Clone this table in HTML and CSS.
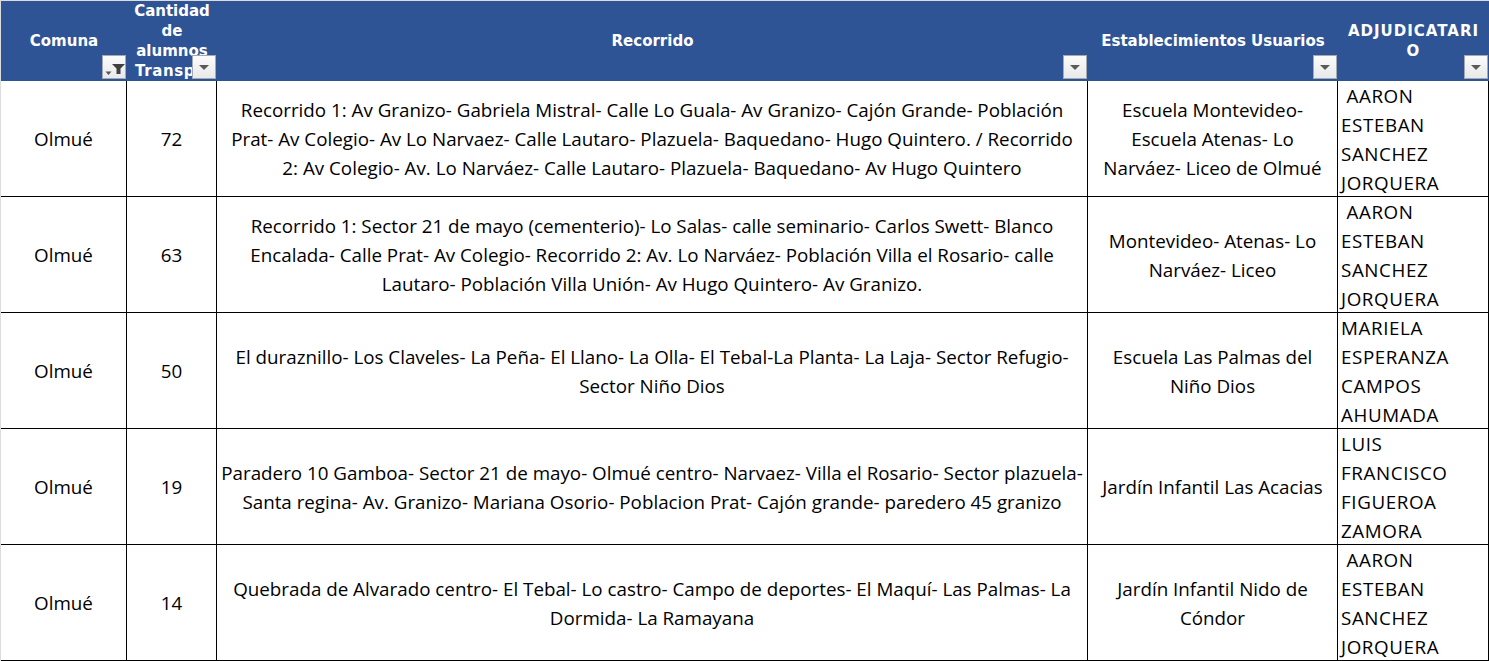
FILE: index.html
```html
<!DOCTYPE html>
<html lang="es">
<head>
<meta charset="utf-8">
<title>Recorridos</title>
<link rel="stylesheet" href="styles.css">
</head>
<body>
<div class="sheet">
  <div class="grid">
    <div class="hd">
      <span class="hd-text">Comuna</span>
      <span class="fbtn"><svg class="funnel" width="22" height="22" viewBox="0 0 22 22"><path d="M2.5 15.5h6l-3 3.5z" fill="#555"/><path d="M9 8h13l-4.5 4.5v5.5h-4v-5.5z" fill="#404040"/></svg></span>
    </div>
    <div class="hd">
      <span class="hd-text">Cantidad<br>de<br>alumnos<br><span class="clip">Transp</span></span>
      <span class="fbtn"><span class="tri"></span></span>
    </div>
    <div class="hd">
      <span class="hd-text">Recorrido</span>
      <span class="fbtn"><span class="tri"></span></span>
    </div>
    <div class="hd">
      <span class="hd-text">Establecimientos Usuarios</span>
      <span class="fbtn"><span class="tri"></span></span>
    </div>
    <div class="hd">
      <span class="hd-text wide">ADJUDICATARI<br>O</span>
      <span class="fbtn"><span class="tri"></span></span>
    </div>

    <div class="td c">Olmué</div>
    <div class="td c">72</div>
    <div class="td c">Recorrido 1: Av Granizo- Gabriela Mistral- Calle Lo Guala- Av Granizo- Cajón Grande- Población<br>Prat- Av Colegio- Av Lo Narvaez- Calle Lautaro- Plazuela- Baquedano- Hugo Quintero. / Recorrido<br>2: Av Colegio- Av. Lo Narváez- Calle Lautaro- Plazuela- Baquedano- Av Hugo Quintero</div>
    <div class="td c">Escuela Montevideo-<br>Escuela Atenas- Lo<br>Narváez- Liceo de Olmué</div>
    <div class="td l">&nbsp;AARON<br>ESTEBAN<br>SANCHEZ<br>JORQUERA</div>

    <div class="td c">Olmué</div>
    <div class="td c">63</div>
    <div class="td c">Recorrido 1: Sector 21 de mayo (cementerio)- Lo Salas- calle seminario- Carlos Swett- Blanco<br>Encalada- Calle Prat- Av Colegio- Recorrido 2: Av. Lo Narváez- Población Villa el Rosario- calle<br>Lautaro- Población Villa Unión- Av Hugo Quintero- Av Granizo.</div>
    <div class="td c">Montevideo- Atenas- Lo<br>Narváez- Liceo</div>
    <div class="td l">&nbsp;AARON<br>ESTEBAN<br>SANCHEZ<br>JORQUERA</div>

    <div class="td c">Olmué</div>
    <div class="td c">50</div>
    <div class="td c">El duraznillo- Los Claveles- La Peña- El Llano- La Olla- El Tebal-La Planta- La Laja- Sector Refugio-<br>Sector Niño Dios</div>
    <div class="td c">Escuela Las Palmas del<br>Niño Dios</div>
    <div class="td l">MARIELA<br>ESPERANZA<br>CAMPOS<br>AHUMADA</div>

    <div class="td c">Olmué</div>
    <div class="td c">19</div>
    <div class="td c">Paradero 10 Gamboa- Sector 21 de mayo- Olmué centro- Narvaez- Villa el Rosario- Sector plazuela-<br>Santa regina- Av. Granizo- Mariana Osorio- Poblacion Prat- Cajón grande- paredero 45 granizo</div>
    <div class="td c">Jardín Infantil Las Acacias</div>
    <div class="td l">LUIS<br>FRANCISCO<br>FIGUEROA<br>ZAMORA</div>

    <div class="td c">Olmué</div>
    <div class="td c">14</div>
    <div class="td c">Quebrada de Alvarado centro- El Tebal- Lo castro- Campo de deportes- El Maquí- Las Palmas- La<br>Dormida- La Ramayana</div>
    <div class="td c">Jardín Infantil Nido de<br>Cóndor</div>
    <div class="td l">&nbsp;AARON<br>ESTEBAN<br>SANCHEZ<br>JORQUERA</div>
  </div>
</div>
</body>
</html>
```

FILE: styles.css
```css
html, body {
  margin: 0;
  padding: 0;
  background: #dcdcdc;
}
.sheet {
  padding: 1px 0 0 1px;
  width: 1489px;
  height: 661px;
  box-sizing: border-box;
  overflow: hidden;
}
.grid {
  display: grid;
  grid-template-columns: 126px 90px 871px 250px 151px;
  grid-template-rows: 80px repeat(5, 116px);
  background: #ffffff;
  width: 1488px;
}
.hd {
  position: relative;
  background: #2f5496;
  color: #ffffff;
  font-family: "DejaVu Sans", sans-serif;
  font-weight: bold;
  font-size: 15px;
  line-height: 20px;
  display: flex;
  align-items: center;
  justify-content: center;
  text-align: center;
  overflow: hidden;
}
.hd-text {
  display: block;
  width: 100%;
}
.hd-text.wide {
  letter-spacing: 1px;
}
.clip {
  display: block;
  text-align: left;
  padding-left: 8px;
  letter-spacing: 0.6px;
  white-space: nowrap;
}
.fbtn {
  position: absolute;
  right: 1px;
  bottom: 2px;
  width: 24px;
  height: 24px;
  box-sizing: border-box;
  border: 1px solid #a3a9b1;
  background: linear-gradient(#fbfbfb, #e9e9e9);
  display: flex;
  align-items: center;
  justify-content: center;
}
.fbtn .funnel {
  display: block;
}
.tri {
  width: 0;
  height: 0;
  border-left: 5px solid transparent;
  border-right: 5px solid transparent;
  border-top: 5px solid #5a5a5a;
  margin-top: 1px;
}
.td {
  box-sizing: border-box;
  border-right: 1px solid #000000;
  border-bottom: 1px solid #000000;
  padding-top: 2px;
  font-family: "Open Sans", sans-serif;
  font-size: 18.8px;
  line-height: 29px;
  color: #000000;
  display: flex;
  align-items: center;
  white-space: nowrap;
  overflow: hidden;
}
.td.c {
  justify-content: center;
  text-align: center;
}
.td.l {
  justify-content: flex-start;
  text-align: left;
  padding-left: 3px;
  letter-spacing: 0.6px;
}
```
